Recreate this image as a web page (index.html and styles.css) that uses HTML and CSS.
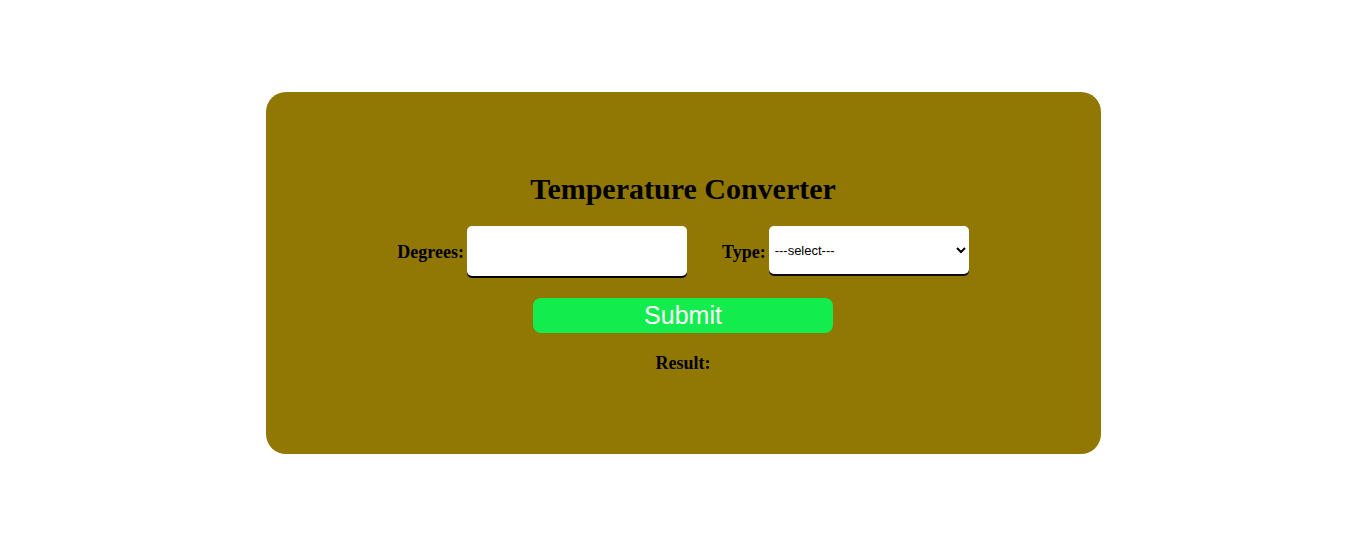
FILE: index.html
```html
<!DOCTYPE html>
<html>
<head>
<meta charset="utf-8">
<link rel="stylesheet" href="styles.css">
</head>
<body>
<div class="card">
  <h1 class="title">Temperature Converter</h1>
  <div class="row">
    <label class="lbl">Degrees:</label>
    <input class="inp" type="text">
    <label class="lbl type-lbl">Type:</label>
    <select class="sel"><option>---select---</option></select>
  </div>
  <button class="submit">Submit</button>
  <div class="result">Result:</div>
</div>
</body>
</html>
```
FILE: styles.css
```css
html, body { margin: 0; padding: 0; background: #fff; }
body { font-family: "Liberation Serif", "Times New Roman", serif; }
.card {
  width: 835px;
  height: 362px;
  margin: 92px auto 0;
  background: #917804;
  border-radius: 20px;
  box-sizing: border-box;
  padding-top: 80px;
  display: flex;
  flex-direction: column;
  align-items: center;
}
.title {
  margin: 0;
  font-size: 30px;
  font-weight: bold;
  line-height: 34px;
  color: #000;
}
.row {
  display: flex;
  align-items: center;
  margin-top: 20px;
}
.lbl {
  font-weight: bold;
  font-size: 18px;
  color: #000;
  margin-right: 3px;
  padding-top: 3px;
}
.type-lbl { margin-left: 35px; }
.inp {
  width: 220px;
  height: 50px;
  box-sizing: border-box;
  border: none;
  border-radius: 5px;
  background: #fff;
  box-shadow: 0 2px 0 #000;
  outline: none;
}
.sel {
  width: 200px;
  height: 48px;
  margin-top: -2px;
  box-sizing: border-box;
  border: none;
  border-radius: 5px;
  background: #fff;
  box-shadow: 0 2px 0 #0a0a1a;
  font-family: "Liberation Sans", Arial, sans-serif;
  font-size: 13px;
  padding: 0 2px;
}
.submit {
  margin-top: 22px;
  width: 300px;
  height: 35px;
  border: none;
  border-radius: 8px;
  background: #13ec4d;
  color: #fff;
  font-family: "Liberation Sans", Arial, sans-serif;
  font-size: 25px;
  padding: 0;
  line-height: 35px;
}
.result {
  margin-top: 20px;
  font-weight: bold;
  font-size: 18px;
  color: #000;
}
```
